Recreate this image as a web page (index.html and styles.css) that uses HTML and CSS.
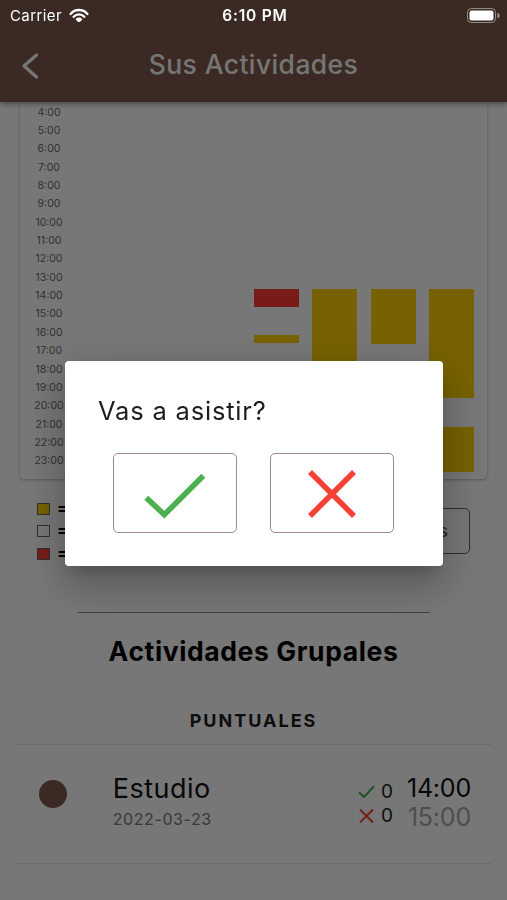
FILE: index.html
```html
<!DOCTYPE html>
<html lang="es">
<head>
<meta charset="utf-8">
<title>Sus Actividades</title>
<link rel="stylesheet" href="styles.css">
</head>
<body>
<div class="screen">
  <div class="statusbar">
    <div class="status-left">
      <span class="carrier">Carrier</span>
      <svg class="wifi" width="20" height="15" viewBox="0 0 20 15">
        <path d="M1.6 6.9 A11 11 0 0 1 18.4 6.9" fill="none" stroke="#fff" stroke-width="2.4" stroke-linecap="round"/>
        <path d="M4.7 9.8 A7 7 0 0 1 15.3 9.8" fill="none" stroke="#fff" stroke-width="2.4" stroke-linecap="round"/>
        <path d="M7.6 12.4 A3.3 3.3 0 0 1 12.4 12.4 L10 14.6 Z" fill="#fff" stroke="#fff" stroke-width="1.6" stroke-linejoin="round"/>
      </svg>
    </div>
    <div class="status-time">6:10 PM</div>
    <div class="status-right">
      <svg class="battery" width="33" height="15" viewBox="0 0 33 15">
        <rect x="0.5" y="0.5" width="28" height="14" rx="4" fill="none" stroke="rgba(255,255,255,0.45)" stroke-width="1"/>
        <rect x="2.5" y="2.5" width="24" height="10" rx="2.2" fill="#fff"/>
        <path d="M30.2 5 a2 2 0 0 1 0 5 z" fill="rgba(255,255,255,0.45)"/>
      </svg>
    </div>
  </div>

  <header class="appbar">
    <div class="nav">
      <svg class="back" width="18" height="26" viewBox="0 0 18 26">
        <polyline points="15.5,2 3,13 15.5,24" fill="none" stroke="#fff" stroke-width="3.2" stroke-linecap="round" stroke-linejoin="round"/>
      </svg>
      <h1 class="title">Sus Actividades</h1>
      <span></span>
    </div>
  </header>

  <main class="content">
    <section class="chart-card">
      <div class="hours">
        <span>4:00</span><span>5:00</span><span>6:00</span><span>7:00</span><span>8:00</span>
        <span>9:00</span><span>10:00</span><span>11:00</span><span>12:00</span><span>13:00</span>
        <span>14:00</span><span>15:00</span><span>16:00</span><span>17:00</span><span>18:00</span>
        <span>19:00</span><span>20:00</span><span>21:00</span><span>22:00</span><span>23:00</span>
      </div>
      <div class="plot">
        <div class="bar bar-red" style="left:176px;top:185.5px;height:18px"></div>
        <div class="bar bar-yellow" style="left:176px;top:231.5px;height:8px"></div>
        <div class="bar bar-yellow" style="left:234px;top:185.5px;height:111px"></div>
        <div class="bar bar-yellow" style="left:293px;top:185.5px;height:55px"></div>
        <div class="bar bar-yellow" style="left:351px;top:185.5px;height:109px"></div>
        <div class="bar bar-yellow" style="left:351px;top:323.5px;height:45px"></div>
      </div>
    </section>

    <section class="legend-row">
      <ul class="legend">
        <li><span class="swatch swatch-yellow"></span>= Ocupado</li>
        <li><span class="swatch swatch-white"></span>= Libre</li>
        <li><span class="swatch swatch-red"></span>= Falta</li>
      </ul>
      <button class="outline-btn">Ver Actividades</button>
    </section>

    <hr class="rule">

    <h2 class="section-title">Actividades Grupales</h2>
    <h3 class="section-sub">PUNTUALES</h3>

    <div class="list">
      <div class="item">
        <span class="dot"></span>
        <div class="item-main">
          <div class="item-name">Estudio</div>
          <div class="item-date">2022-03-23</div>
        </div>
        <div class="counts">
          <div class="count">
            <svg width="17" height="13" viewBox="0 0 17 13"><polyline points="1,7.3 6,12 16,1.2" fill="none" stroke="#4caf50" stroke-width="2"/></svg>
            <span>0</span>
          </div>
          <div class="count">
            <svg width="17" height="14" viewBox="0 0 17 14"><path d="M2 0.5 L15 13.5 M15 0.5 L2 13.5" fill="none" stroke="#f44336" stroke-width="2"/></svg>
            <span>0</span>
          </div>
        </div>
        <div class="times">
          <div class="time-start">14:00</div>
          <div class="time-end">15:00</div>
        </div>
      </div>
    </div>
  </main>

  <div class="barrier">
    <div class="dialog" role="dialog">
      <p class="dialog-title">Vas a asistir?</p>
      <div class="choices">
        <button class="choice" aria-label="Sí">
          <svg class="icon-check" width="60" height="44" viewBox="0 0 60 44">
            <polyline points="1.3,25.7 19.3,42.7 58.3,3.7" fill="none" stroke="#4caf50" stroke-width="5.6"/>
          </svg>
        </button>
        <button class="choice" aria-label="No">
          <svg class="icon-cross" width="44" height="44" viewBox="0 0 44 44">
            <path d="M0 0 L44 44 M44 0 L0 44" fill="none" stroke="#f44336" stroke-width="5.6"/>
          </svg>
        </button>
      </div>
    </div>
  </div>
</div>
</body>
</html>
```

FILE: styles.css
```css
* {
  box-sizing: border-box;
  margin: 0;
  padding: 0;
}

html,
body {
  width: 507px;
  height: 900px;
  overflow: hidden;
}

body {
  font-family: Inter, "Noto Sans", "DejaVu Sans", sans-serif;
  background: #fff;
  color: #111;
}

.screen {
  position: relative;
  width: 507px;
  height: 900px;
  overflow: hidden;
  background: #fff;
}

/* ---------- status bar (system overlay) ---------- */
.statusbar {
  position: absolute;
  top: 0;
  left: 0;
  right: 0;
  height: 30px;
  z-index: 30;
  display: grid;
  grid-template-columns: 1fr auto 1fr;
  align-items: center;
  padding: 0 7px 0 10px;
  color: #fff;
}

.status-left {
  display: flex;
  align-items: center;
  gap: 7px;
}

.carrier {
  font-size: 15px;
  font-weight: 400;
  letter-spacing: 0.4px;
}

.wifi {
  display: block;
  margin-top: -1px;
}

.status-time {
  font-size: 15.5px;
  font-weight: 600;
  letter-spacing: 0.8px;
}

.status-right {
  display: flex;
  justify-content: flex-end;
}

.battery {
  display: block;
}

/* ---------- app bar ---------- */
.appbar {
  position: relative;
  z-index: 2;
  height: 102px;
  padding-top: 30px;
  background: #7f5b4c;
  box-shadow: 0 2px 5px rgba(0, 0, 0, 0.4);
}

.nav {
  height: 72px;
  display: grid;
  grid-template-columns: 60px 1fr 60px;
  align-items: center;
}

.back {
  display: block;
  margin-left: 21px;
  margin-top: -1px;
}

.title {
  text-align: center;
  font-size: 26.5px;
  font-weight: 500;
  color: #fafafa;
  letter-spacing: 0.4px;
  margin-top: -4px;
}

/* ---------- chart ---------- */
.chart-card {
  margin: 0 20px;
  background: #fff;
  border-radius: 0 0 4px 4px;
  box-shadow: 0 1px 3px rgba(0, 0, 0, 0.28);
  display: grid;
  grid-template-columns: 58px 1fr;
  padding-top: 1.5px;
  padding-bottom: 8px;
}

.hours {
  display: grid;
  grid-template-rows: repeat(20, 18.37px);
}

.hours span {
  font-size: 10.5px;
  line-height: 18.37px;
  text-align: center;
  color: #6a6a6a;
}

.plot {
  position: relative;
}

.bar {
  position: absolute;
  width: 45px;
}

.bar-yellow {
  background: #ffd000;
}

.bar-red {
  background: #ff3d32;
}

/* ---------- legend ---------- */
.legend-row {
  display: flex;
  justify-content: space-between;
  align-items: flex-start;
  padding: 0 37px;
  margin-top: 18.5px;
}

.legend {
  list-style: none;
}

.legend li {
  height: 22.7px;
  display: flex;
  align-items: center;
  gap: 7px;
  font-size: 17px;
  font-weight: 700;
  color: #000;
}

.swatch {
  width: 13px;
  height: 12px;
  border: 1.5px solid #666;
}

.swatch-yellow {
  background: #ffd000;
}

.swatch-white {
  background: #fff;
}

.swatch-red {
  background: #ff3d32;
}

.outline-btn {
  margin-top: 10.5px;
  height: 46px;
  padding: 0 21px;
  border: 1.5px solid #6e5f5a;
  border-radius: 5px;
  background: #fff;
  font-family: inherit;
  font-size: 18px;
  font-weight: 500;
  color: #555;
}

.rule {
  width: 352px;
  height: 1px;
  margin: 47px auto 0;
  border: 0;
  background: #8c8c8c;
}

.section-title {
  margin-top: 21.4px;
  text-align: center;
  font-size: 26.5px;
  line-height: 32px;
  font-weight: 700;
  letter-spacing: 0.6px;
  color: #000;
}

.section-sub {
  margin-top: 44px;
  text-align: center;
  font-size: 18px;
  line-height: 20px;
  font-weight: 700;
  letter-spacing: 2px;
  color: #1c1c1c;
}

/* ---------- list ---------- */
.list {
  margin: 13px 15px 0;
  border-top: 1px solid #e8e8e8;
}

.item {
  height: 119px;
  display: flex;
  align-items: flex-start;
  padding: 29px 21px 0 24px;
  border-bottom: 1px solid #e8e8e8;
}

.dot {
  flex: none;
  width: 28px;
  height: 28px;
  margin-top: 6px;
  border-radius: 50%;
  background: #7f5b4c;
}

.item-main {
  flex: 1;
  margin-left: 45.7px;
}

.item-name {
  font-size: 27px;
  line-height: 30px;
  font-weight: 400;
  letter-spacing: 0.5px;
  color: #111;
}

.item-date {
  margin-top: 5px;
  font-size: 16px;
  line-height: 20px;
  letter-spacing: 0.6px;
  color: #7a7a7a;
}

.counts {
  margin-top: 6px;
  margin-right: 14px;
}

.count {
  height: 24px;
  display: flex;
  align-items: center;
  gap: 6px;
  font-size: 19px;
  color: #222;
}

.count svg {
  display: block;
}

.times {
  text-align: right;
}

.time-start,
.time-end {
  font-size: 25px;
  line-height: 29px;
  letter-spacing: -0.2px;
}

.time-start {
  color: #111;
}

.time-end {
  color: #a8a8a8;
}

/* ---------- dialog ---------- */
.barrier {
  position: fixed;
  inset: 0;
  z-index: 10;
  background: rgba(0, 0, 0, 0.535);
  display: flex;
  justify-content: center;
  align-items: center;
  padding-top: 27px;
}

.dialog {
  width: 378px;
  background: #fff;
  border-radius: 4px;
  padding: 35px 0 33px;
  box-shadow: 0 11px 15px -7px rgba(0, 0, 0, 0.2),
    0 24px 38px 3px rgba(0, 0, 0, 0.14),
    0 9px 46px 8px rgba(0, 0, 0, 0.12);
}

.dialog-title {
  padding-left: 33.5px;
  font-size: 25.5px;
  line-height: 29px;
  letter-spacing: 0.8px;
  color: #1d1d1d;
}

.choices {
  display: flex;
  justify-content: center;
  gap: 33px;
  margin-top: 28.3px;
}

.choice {
  width: 124px;
  height: 80px;
  border: 1.3px solid #a3888a;
  border-radius: 5px;
  background: #fff;
  display: flex;
  align-items: center;
  justify-content: center;
}

.choice svg {
  display: block;
  overflow: visible;
}

.icon-check {
  margin-top: 2px;
}

.icon-cross {
  margin-top: 1px;
}
```
